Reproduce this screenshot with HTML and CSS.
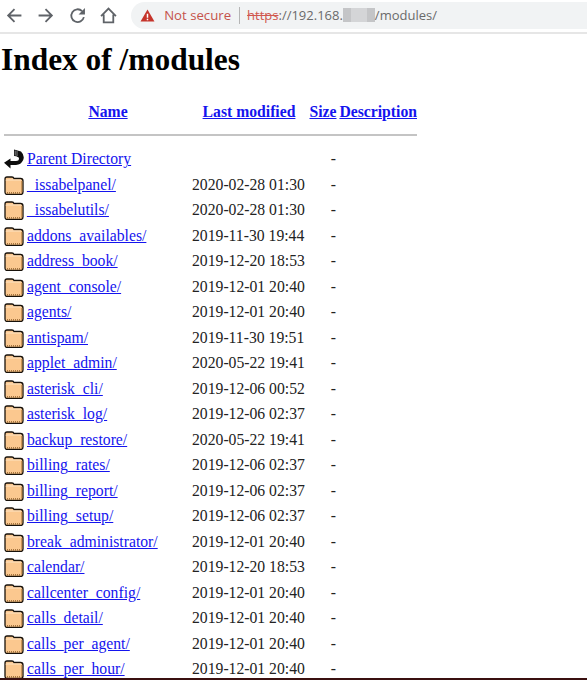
FILE: index.html
```html
<!DOCTYPE html>
<html lang="en">
<head>
    <meta charset="UTF-8">
    <meta name="viewport" content="width=device-width, initial-scale=1.0">
    <title>Index of /modules</title>
    <link rel="stylesheet" href="styles.css">
</head>
<body>

<svg class="sprites" width="0" height="0">
    <symbol id="folder" viewBox="0 0 20 20">
        <path d="M1 17V4Q1 2 3 2H8Q9.500 2 10 3.500H16.500Q19 3.500 19 6V17Q19 19.500 16.500 19.500H3.500Q1 19.500 1 17Z" fill="#fbc88f" stroke="#17110a" stroke-width="1.300"/>
        <path d="M2 5.500Q2 5 3 5H17" fill="none" stroke="#fde3c4" stroke-width="1"/>
        <path d="M3 17.800H17.500" stroke="#8a5a26" stroke-width="1.300" stroke-dasharray="1 1"/>
        <path d="M17.700 6V17" stroke="#c08a4c" stroke-width="1"/>
    </symbol>
</svg>

<header class="toolbar">
    <svg class="nav-icon" viewBox="0 0 16 16"><path d="M14.500 8H2.500M8 2 2 8 8 14"/></svg>
    <svg class="nav-icon" viewBox="0 0 16 16"><path d="M1.500 8H13.500M8 2 14 8 8 14"/></svg>
    <svg class="nav-icon" viewBox="0 0 16 16"><path d="M14 9.500A6 6 0 1 1 12.300 3.800"/><path class="solid" d="M15 1V7H9Z"/></svg>
    <svg class="nav-icon" viewBox="0 0 16 16"><path d="M1 8.500 8 1.500l7 7M3.500 7V14.500H12.500V7"/></svg>
    <div class="omnibox">
        <svg class="warn" viewBox="0 0 16 14"><path d="M8 .5 15.500 13.500H.5Z" fill="#c5342b"/><path d="M8 5V9.500M8 10.500V12" stroke="#fff" stroke-width="1.600"/></svg>
        <span class="not-secure">Not secure</span>
        <span class="sep"></span>
        <span class="url"><s class="scheme">https</s>://192.168.<span class="blur"></span>/modules/</span>
    </div>
</header>

<main class="page">
    <h1>Index of /modules</h1>
    <table class="listing">
        <thead>
            <tr>
                <th class="c-icon"></th>
                <th class="c-name"><a href="#">Name</a></th>
                <th class="c-date"><a href="#">Last modified</a></th>
                <th class="c-size"><a href="#">Size</a></th>
                <th class="c-desc"><a href="#">Description</a></th>
            </tr>
            <tr class="rule-row"><th colspan="5"><hr></th></tr>
        </thead>
        <tbody id="rows">
            <tr>
                <td class="c-icon">
                    <svg class="icon" viewBox="0 0 20 20">
                        <path d="M10 0.500 17 2.500Q21 6.500 19.200 11Q17 15.800 12 16H6.500V19.500L0 13.800 6.500 9.500V12H12Q15 12 15 9.500Q15 7.500 10 7Z" fill="#0d0d0d"/>
                        <path d="M11.200 1.500V6.500M13 2V7" stroke="#aaa" stroke-width=".8"/>
                    </svg>
                </td>
                <td><a href="#">Parent Directory</a></td>
                <td></td>
                <td class="size">-</td>
                <td></td>
            </tr>
        </tbody>
    </table>
</main>
<div class="bottom-edge"></div>

<script>
    const modules = [
        ['_issabelpanel/', '2020-02-28 01:30'],
        ['_issabelutils/', '2020-02-28 01:30'],
        ['addons_availables/', '2019-11-30 19:44'],
        ['address_book/', '2019-12-20 18:53'],
        ['agent_console/', '2019-12-01 20:40'],
        ['agents/', '2019-12-01 20:40'],
        ['antispam/', '2019-11-30 19:51'],
        ['applet_admin/', '2020-05-22 19:41'],
        ['asterisk_cli/', '2019-12-06 00:52'],
        ['asterisk_log/', '2019-12-06 02:37'],
        ['backup_restore/', '2020-05-22 19:41'],
        ['billing_rates/', '2019-12-06 02:37'],
        ['billing_report/', '2019-12-06 02:37'],
        ['billing_setup/', '2019-12-06 02:37'],
        ['break_administrator/', '2019-12-01 20:40'],
        ['calendar/', '2019-12-20 18:53'],
        ['callcenter_config/', '2019-12-01 20:40'],
        ['calls_detail/', '2019-12-01 20:40'],
        ['calls_per_agent/', '2019-12-01 20:40'],
        ['calls_per_hour/', '2019-12-01 20:40']
    ];

    const rows = document.getElementById('rows');
    modules.forEach(([name, date]) => {
        rows.innerHTML += `
            <tr>
                <td class="c-icon"><svg class="icon"><use href="#folder"/></svg></td>
                <td><a href="#">${name}</a></td>
                <td class="date">${date}</td>
                <td class="size">-</td>
                <td></td>
            </tr>`;
    });
</script>

</body>
</html>
```

FILE: styles.css
```css
html, body {
    height: 100%;
}
body {
    margin: 0;
    height: 680px;
    overflow: hidden;
    display: flex;
    flex-direction: column;
    background: white;
    font-family: "Liberation Serif", "Times New Roman", serif;
    color: #222;
}
.sprites {
    position: absolute;
}
.toolbar {
    flex: none;
    height: 30px;
    display: flex;
    align-items: center;
    gap: 14.3px;
    padding: 0 0 2px 6px;
    border-bottom: 2px solid #e6e6e6;
    font-family: "Open Sans", "Noto Sans", sans-serif;
}
.nav-icon {
    width: 17px;
    height: 17px;
    fill: none;
    stroke: #5f6368;
    stroke-width: 1.7;
}
.nav-icon .solid {
    fill: #5f6368;
    stroke: none;
}
.omnibox {
    flex: 1;
    height: 27px;
    padding-left: 9px;
    display: flex;
    align-items: center;
    background: #f1f3f4;
    border-radius: 14px 0 0 14px;
    font-size: 13.2px;
}
.warn {
    width: 15px;
    height: 13px;
    margin-right: 9px;
}
.not-secure {
    color: #c5524a;
}
.sep {
    width: 1px;
    height: 17px;
    margin: 0 7px 0 8px;
    background: #b5b5b5;
}
.url {
    color: #6a6a6a;
    display: flex;
    align-items: center;
    font-size: 13px;
}
.scheme {
    color: #d0574e;
}
.blur {
    width: 32px;
    height: 14px;
    background: #d4d5d7;
    border-left: 8px solid #c4c5c7;
    border-right: 8px solid #c4c5c7;
    box-sizing: border-box;
}
.page {
    flex: 1;
    min-height: 0;
    overflow: hidden;
}
h1 {
    margin: 8px 0 17px 1px;
    font-size: 31.4px;
    line-height: 35px;
    color: #000;
}
a {
    color: #1414ee;
}
.listing {
    border-collapse: collapse;
    margin-left: 4px;
    font-size: 15.7px;
    table-layout: fixed;
    width: 413px;
}
.listing th {
    padding: 0;
    height: 35px;
    font-size: 15.7px;
    text-align: center;
}
.listing .c-desc {
    text-align: right;
}
.listing td {
    padding: 0;
    height: 25.5px;
    white-space: nowrap;
}
.c-icon {
    width: 23px;
}
.c-name {
    width: 162px;
}
.c-date {
    width: 120px;
}
.c-size {
    width: 28px;
}
.listing .rule-row th {
    height: 17.5px;
    padding-top: 5px;
    box-sizing: border-box;
    vertical-align: top;
}
hr {
    margin: 0;
    border: none;
    height: 2px;
    background: #c4c4c4;
}
.icon {
    display: block;
    width: 20px;
    height: 20px;
}
.listing .date {
    padding-left: 3px;
}
.listing .size {
    text-align: right;
    padding-right: 1px;
}
.bottom-edge {
    flex: none;
    height: 2px;
    background: #3a1010;
}
```
